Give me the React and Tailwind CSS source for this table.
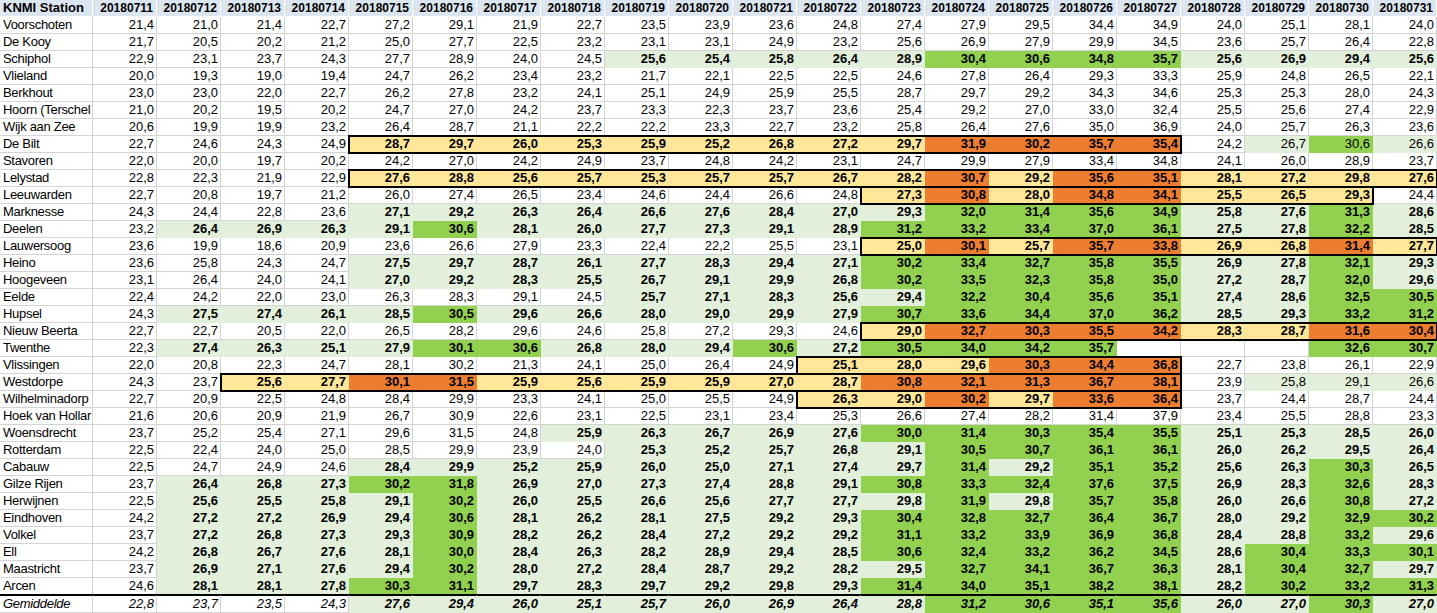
import React from "react";

const DATES = Array.from({ length: 21 }, (_, i) => String(20180711 + i));

const ROWS = [
  ["Voorschoten", "21,4 21,0 21,4 22,7 27,2 29,1 21,9 22,7 23,5 23,9 23,6 24,8 27,4 27,9 29,5 34,4 34,9 24,0 25,1 28,1 24,0", ".....................", null],
  ["De Kooy", "21,7 20,5 20,2 21,2 25,0 27,7 22,5 23,2 23,1 23,1 24,9 23,2 25,6 26,9 27,9 29,9 34,5 23,6 25,7 26,4 22,8", ".....................", null],
  ["Schiphol", "22,9 23,1 23,7 24,3 27,7 28,9 24,0 24,5 25,6 25,4 25,8 26,4 28,9 30,4 30,6 34,8 35,7 25,6 26,9 29,4 25,6", "........lllllggggllll", null],
  ["Vlieland", "20,0 19,3 19,0 19,4 24,7 26,2 23,4 23,2 21,7 22,1 22,5 22,5 24,6 27,8 26,4 29,3 33,3 25,9 24,8 26,5 22,1", ".....................", null],
  ["Berkhout", "23,0 23,0 22,0 22,7 26,2 27,8 23,2 24,1 25,1 24,9 25,9 25,5 28,7 29,7 29,2 34,3 34,6 25,3 25,3 28,0 24,3", ".....................", null],
  ["Hoorn (Terschel", "21,0 20,2 19,5 20,2 24,7 27,0 24,2 23,7 23,3 22,3 23,7 23,6 25,4 29,2 27,0 33,0 32,4 25,5 25,6 27,4 22,9", ".....................", null],
  ["Wijk aan Zee", "20,6 19,9 19,9 23,2 26,4 28,7 21,1 22,2 22,2 23,3 22,7 23,2 25,8 26,4 27,6 35,0 36,9 24,0 25,7 26,3 23,6", ".....................", null],
  ["De Bilt", "22,7 24,6 24,3 24,9 28,7 29,7 26,0 25,3 25,9 25,2 26,8 27,2 29,7 31,9 30,2 35,7 35,4 24,2 26,7 30,6 26,6", "....yyyyyyyyyoooo.LGL", [4, 16]],
  ["Stavoren", "22,0 20,0 19,7 20,2 24,2 27,0 24,2 24,9 23,7 24,8 24,2 23,1 24,7 29,9 27,9 33,4 34,8 24,1 26,0 28,9 23,7", ".....................", null],
  ["Lelystad", "22,8 22,3 21,9 22,9 27,6 28,8 25,6 25,7 25,3 25,7 25,7 26,7 28,2 30,7 29,2 35,6 35,1 28,1 27,2 29,8 27,6", "....yyyyyyyyyoyooyyyy", [4, 20]],
  ["Leeuwarden", "22,7 20,8 19,7 21,2 26,0 27,4 26,5 23,4 24,6 24,4 26,6 24,8 27,3 30,8 28,0 34,8 34,1 25,5 26,5 29,3 24,4", "............yoyooyyy.", [12, 19]],
  ["Marknesse", "24,3 24,4 22,8 23,6 27,1 29,2 26,3 26,4 26,6 27,6 28,4 27,0 29,3 32,0 31,4 35,6 34,9 25,8 27,6 31,3 28,6", "....lllllllllggggllgl", null],
  ["Deelen", "23,2 26,4 26,9 26,3 29,1 30,6 28,1 26,0 27,7 27,3 29,1 28,9 31,2 33,2 33,4 37,0 36,1 27,5 27,8 32,2 28,5", ".llllgllllllgggggllgl", null],
  ["Lauwersoog", "23,6 19,9 18,6 20,9 23,6 26,6 27,9 23,3 22,4 22,2 25,5 23,1 25,0 30,1 25,7 35,7 33,8 26,9 26,8 31,4 27,7", "............yoyooyyoy", [12, 20]],
  ["Heino", "23,6 25,8 24,3 24,7 27,5 29,7 28,7 26,1 27,7 28,3 29,4 27,1 30,2 33,4 32,7 35,8 35,5 26,9 27,8 32,1 29,3", "....llllllllgggggllgl", null],
  ["Hoogeveen", "23,1 26,4 24,0 24,1 27,0 29,2 28,3 25,5 26,7 29,1 29,9 26,8 30,2 33,5 32,3 35,8 35,0 27,2 28,7 32,0 29,6", "....llllllllgggggllgl", null],
  ["Eelde", "22,4 24,2 22,0 23,0 26,3 28,3 29,1 24,5 25,7 27,1 28,3 25,6 29,4 32,2 30,4 35,6 35,1 27,4 28,6 32,5 30,5", "........lllllggggllgg", null],
  ["Hupsel", "24,3 27,5 27,4 26,1 28,5 30,5 29,6 26,6 28,0 29,0 29,9 27,9 30,7 33,6 34,4 37,0 36,2 28,5 29,3 33,2 31,2", ".llllgllllllgggggllgg", null],
  ["Nieuw Beerta", "22,7 22,7 20,5 22,0 26,5 28,2 29,6 24,6 25,8 27,2 29,3 24,6 29,0 32,7 30,3 35,5 34,2 28,3 28,7 31,6 30,4", "............yooooyyoo", [12, 20]],
  ["Twenthe", "22,3 27,4 26,3 25,1 27,9 30,1 30,6 26,8 28,0 29,4 30,6 27,2 30,5 34,0 34,2 35,7 _ _ _ 32,6 30,7", ".llllgglllglgggg...gg", null],
  ["Vlissingen", "22,0 20,8 22,3 24,7 28,1 30,2 21,3 24,1 25,0 26,4 24,9 25,1 28,0 29,6 30,3 34,4 36,8 22,7 23,8 26,1 22,9", "...........yyyooo....", [11, 16]],
  ["Westdorpe", "24,3 23,7 25,6 27,7 30,1 31,5 25,9 25,6 25,9 25,9 27,0 28,7 30,8 32,1 31,3 36,7 38,1 23,9 25,8 29,1 26,6", "..yyooyyyyyyooooo.LLL", [2, 16]],
  ["Wilhelminadorp", "22,7 20,9 22,5 24,8 28,4 29,9 23,3 24,1 25,0 25,5 24,9 26,3 29,0 30,2 29,7 33,6 36,4 23,7 24,4 28,7 24,4", "...........yyoyoo....", [11, 16]],
  ["Hoek van Hollar", "21,6 20,6 20,9 21,9 26,7 30,9 22,6 23,1 22,5 23,1 23,4 25,3 26,6 27,4 28,2 31,4 37,9 23,4 25,5 28,8 23,3", ".....................", null],
  ["Woensdrecht", "23,7 25,2 25,4 27,1 29,6 31,5 24,8 25,9 26,3 26,7 26,9 27,6 30,0 31,4 30,3 35,4 35,5 25,1 25,3 28,5 26,0", ".......lllllgggggllll", null],
  ["Rotterdam", "22,5 22,4 24,0 25,0 28,5 29,9 23,9 24,0 25,3 25,2 25,7 26,8 29,1 30,5 30,7 36,1 36,1 26,0 26,2 29,5 26,4", "........lllllggggllll", null],
  ["Cabauw", "22,5 24,7 24,9 24,6 28,4 29,9 25,2 25,9 26,0 25,0 27,1 27,4 29,7 31,4 29,2 35,1 35,2 25,6 26,3 30,3 26,5", "....lllllllllglggllgl", null],
  ["Gilze Rijen", "23,7 26,4 26,8 27,3 30,2 31,8 26,9 27,0 27,3 27,4 28,8 29,1 30,8 33,3 32,4 37,6 37,5 26,9 28,3 32,6 28,3", ".lllggllllllgggggllgl", null],
  ["Herwijnen", "22,5 25,6 25,5 25,8 29,1 30,2 26,0 25,5 26,6 25,6 27,7 27,7 29,8 31,9 29,8 35,7 35,8 26,0 26,6 30,8 27,2", ".llllglllllllglggllgl", null],
  ["Eindhoven", "24,2 27,2 27,2 26,9 29,4 30,6 28,1 26,2 28,1 27,5 29,2 29,3 30,4 32,8 32,7 36,4 36,7 28,0 29,2 32,9 30,2", ".llllgllllllgggggllgg", null],
  ["Volkel", "23,7 27,2 26,8 27,3 29,3 30,9 28,2 26,2 28,4 27,2 29,2 29,2 31,1 33,2 33,9 36,9 36,8 28,4 28,8 33,2 29,6", ".llllgllllllgggggllgl", null],
  ["Ell", "24,2 26,8 26,7 27,6 28,1 30,0 28,4 26,3 28,2 28,9 29,4 28,5 30,6 32,4 33,2 36,2 34,5 28,6 30,4 33,3 30,1", ".llllgllllllggggglggg", null],
  ["Maastricht", "23,7 26,9 27,1 27,6 29,4 30,2 28,0 27,2 28,4 28,7 29,2 28,2 29,5 32,7 34,1 36,7 36,3 28,1 30,4 32,7 29,7", ".llllglllllllgggglggl", null],
  ["Arcen", "24,6 28,1 28,1 27,8 30,3 31,1 29,7 28,3 29,7 29,2 29,8 29,3 31,4 34,0 35,1 38,2 38,1 28,2 30,2 33,2 31,3", ".lllggllllllggggglggg", null],
];

const AVG = ["Gemiddelde", "22,8 23,7 23,5 24,3 27,6 29,4 26,0 25,1 25,7 26,0 26,9 26,4 28,8 31,2 30,6 35,1 35,6 26,0 27,0 30,3 27,0", "....lllllllllggggllgl"];

const FMT = {
  ".": "bg-white border-[#d4d4d4]",
  l: "bg-[#e2efda] border-transparent font-bold",
  L: "bg-[#e2efda] border-transparent",
  g: "bg-[#92d050] border-transparent font-bold",
  G: "bg-[#92d050] border-transparent",
  y: "bg-[#ffe699] border-transparent font-bold",
  o: "bg-[#ed7d31] border-transparent font-bold",
};

function Cell({ value, f, avg }) {
  return (
    <div
      className={
        "w-[64px] shrink-0 border-r border-b text-right pr-[2px] text-[13px] leading-[16px] text-black overflow-hidden whitespace-nowrap " +
        FMT[f] +
        (avg ? " h-[18px] border-t border-t-black italic" : " h-[17px]")
      }
    >
      {value === "_" ? "" : value}
    </div>
  );
}

function Row({ name, vals, fmt, box, avg }) {
  const values = vals.split(" ");
  const cells = values.map((v, i) => <Cell key={i} value={v} f={fmt[i]} avg={avg} />);
  let content;
  if (box) {
    const [a, b] = box;
    content = (
      <>
        {cells.slice(0, a)}
        <div className="relative z-10 flex shrink-0 outline-2 outline-solid outline-black -outline-offset-1">
          {cells.slice(a, b + 1)}
        </div>
        {cells.slice(b + 1)}
      </>
    );
  } else {
    content = cells;
  }
  return (
    <div className={"flex " + (avg ? "relative z-10 shadow-[0_-1px_0_#000]" : "")}>
      <div
        className={
          "w-[93px] shrink-0 border-r border-b border-[#d4d4d4] bg-white pl-[3px] text-left text-[13px] leading-[16px] tracking-[-0.3px] text-black overflow-hidden whitespace-nowrap " +
          (avg ? "h-[18px] border-t border-t-black italic" : "h-[17px]")
        }
      >
        {name}
      </div>
      {content}
    </div>
  );
}

export default function App() {
  return (
    <div className="w-[1437px] h-[613px] overflow-hidden bg-white font-['Liberation_Sans',Arial,sans-serif]">
      <div className="flex">
        <div className="w-[93px] h-[17px] shrink-0 border-r border-b border-white bg-[#dce6f1] pl-[3px] text-[13px] leading-[16px] font-bold text-black whitespace-nowrap overflow-hidden">
          KNMI Station
        </div>
        {DATES.map((d) => (
          <div
            key={d}
            className="w-[64px] h-[17px] shrink-0 border-r border-b border-white bg-[#dce6f1] pr-[3px] text-right text-[12px] leading-[16px] font-bold text-black whitespace-nowrap overflow-hidden"
          >
            {d}
          </div>
        ))}
      </div>
      {ROWS.map(([name, vals, fmt, box]) => (
        <Row key={name} name={name} vals={vals} fmt={fmt} box={box} />
      ))}
      <Row name={AVG[0]} vals={AVG[1]} fmt={AVG[2]} box={null} avg />
    </div>
  );
}
